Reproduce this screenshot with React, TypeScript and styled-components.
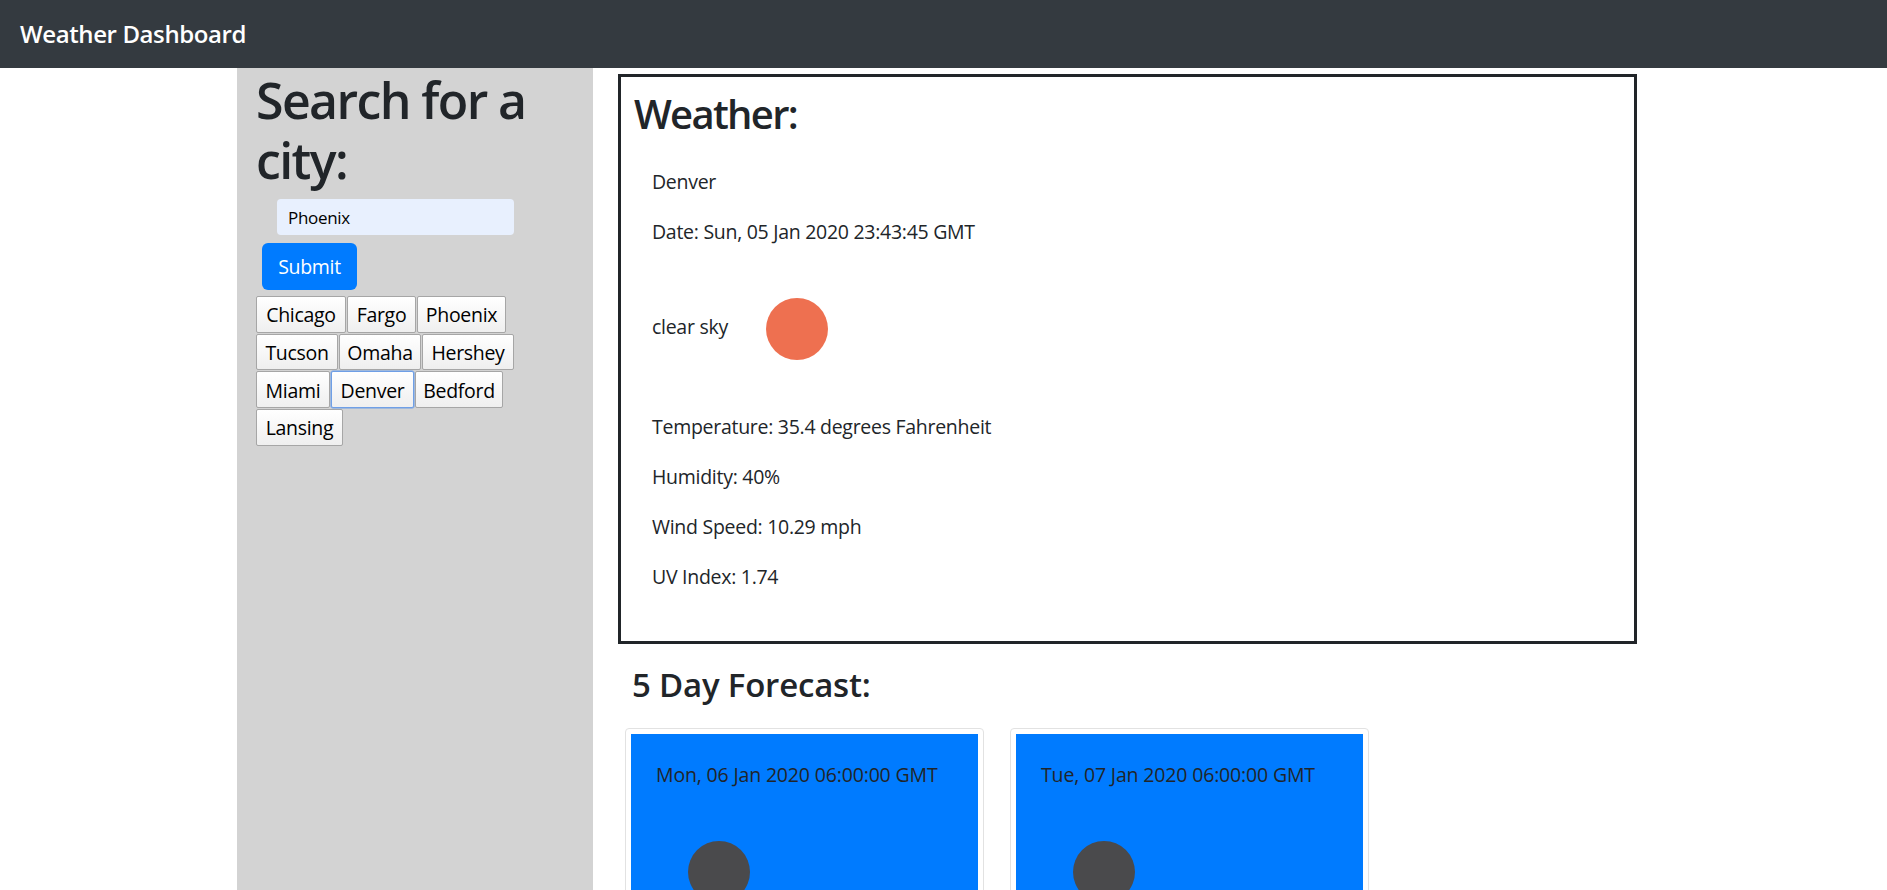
import React from "react";
import styled, { createGlobalStyle } from "styled-components";

const Global = createGlobalStyle`
  html, body { margin: 0; height: 100%; overflow: hidden; background: #fff; }
  body { font-family: "Open Sans", "Noto Sans", sans-serif; font-size: 19.5px; line-height: 30px; color: #212529; }
  #root { height: 100%; }
`;

const Page = styled.div`display: flex; flex-direction: column; height: 100vh;`;
const NavBar = styled.header`
  box-sizing: border-box; flex: 0 0 68px; display: flex; align-items: center; padding: 0 20px 1px;
  background: #343a40;
`;
const Brand = styled.span`color: #fff; font-size: 24px; font-weight: 600; letter-spacing: -0.4px;`;
const Content = styled.div`
  flex: 1; min-height: 0; overflow: hidden; display: flex;
  width: 1413px; margin-left: 237px;
`;
const Sidebar = styled.aside`
  flex: 0 0 356px; background: #d3d3d3; padding: 2px 0 0 19px; box-sizing: border-box;
`;
const SearchTitle = styled.h1`
  margin: 0; font-size: 50px; line-height: 60px; font-weight: 600; letter-spacing: -1.6px;
`;
const SearchInput = styled.input`
  display: block; box-sizing: border-box; margin: 9px 0 0 21px; width: 237px; height: 36px;
  padding: 0 11px; border: 0; border-radius: 4px; background: #e8f0fe; color: #000;
  font: 17px "Open Sans", sans-serif; letter-spacing: -0.3px; outline: none;
`;
const SubmitButton = styled.button`
  display: block; box-sizing: border-box; margin: 8px 0 6px 6px; width: 95px; height: 47px;
  border: 0; border-radius: 6px; background: #007bff; color: #fff;
  font: 19.5px "Open Sans", sans-serif; letter-spacing: -0.3px;
`;
const ChipRows = styled.div`display: flex; flex-direction: column; gap: 1px;`;
const ChipRow = styled.div`display: flex; gap: 1px;`;
const Chip = styled.button<{ $w: number; $focus?: boolean }>`
  box-sizing: border-box; width: ${p => p.$w}px; height: 36.67px; padding: 1px 0 0;
  border: 1px solid ${p => (p.$focus ? "#6f9fe6" : "#a6a6a6")};
  box-shadow: ${p => (p.$focus ? "0 0 0 0.5px #6f9fe6" : "none")};
  border-radius: 2px; background: linear-gradient(#ffffff, #efefef); color: #000;
  font: 19.5px "Open Sans", sans-serif; letter-spacing: -0.3px;
`;
const Main = styled.main`flex: 1; min-width: 0; padding: 6px 13px 0 25px; box-sizing: border-box;`;
const WeatherBox = styled.section`
  box-sizing: border-box; height: 570px; border: 3px solid #212529; padding: 13px 13px 0;
`;
const WeatherTitle = styled.h2`
  margin: 0 0 28.5px; font-size: 40px; line-height: 48px; font-weight: 600; letter-spacing: -1.7px;
`;
const Details = styled.div`padding-left: 18px;`;
const Line = styled.p`margin: 0 0 20px; font-size: 19.5px; line-height: 30px; letter-spacing: -0.28px;`;
const ConditionRow = styled.div`display: flex; align-items: center; height: 122px; margin-bottom: 23px;`;
const ConditionText = styled.span`width: 114px; padding-bottom: 2px; letter-spacing: -0.28px;`;
const Dot = styled.span<{ $color: string }>`
  display: block; width: 62px; height: 62px; border-radius: 50%; background: ${p => p.$color};
`;
const SkyDot = styled(Dot)`margin-top: 2px;`;
const ForecastTitle = styled.h3`
  margin: 22px 0 24px 14px; font-size: 33px; line-height: 38px; font-weight: 600; letter-spacing: -0.2px;
`;
const Cards = styled.div`display: flex; gap: 26px; margin-left: 7px;`;
const Card = styled.article`
  box-sizing: border-box; width: 359px; height: 500px; padding: 5px;
  border: 1px solid #e2e2e2; border-radius: 4px; background: #fff;
`;
const CardBody = styled.div`height: 100%; padding: 26px 25px 0; box-sizing: border-box; background: #007bff;`;
const CardDate = styled.p`margin: 0 0 51px; font-size: 19.5px; line-height: 30px; letter-spacing: -0.16px; white-space: nowrap;`;
const CardDot = styled(Dot)`margin-left: 32px;`;

const rows: { n: string; w: number; focus?: boolean }[][] = [
  [{ n: "Chicago", w: 90 }, { n: "Fargo", w: 69 }, { n: "Phoenix", w: 89 }],
  [{ n: "Tucson", w: 82 }, { n: "Omaha", w: 82 }, { n: "Hershey", w: 92 }],
  [{ n: "Miami", w: 74 }, { n: "Denver", w: 83, focus: true }, { n: "Bedford", w: 88 }],
  [{ n: "Lansing", w: 87 }],
];

export default function App() {
  return (
    <Page>
      <Global />
      <NavBar><Brand>Weather Dashboard</Brand></NavBar>
      <Content>
        <Sidebar>
          <SearchTitle>Search for a city:</SearchTitle>
          <SearchInput defaultValue="Phoenix" />
          <SubmitButton>Submit</SubmitButton>
          <ChipRows>
            {rows.map((r, i) => (
              <ChipRow key={i}>
                {r.map(c => <Chip key={c.n} $w={c.w} $focus={c.focus}>{c.n}</Chip>)}
              </ChipRow>
            ))}
          </ChipRows>
        </Sidebar>
        <Main>
          <WeatherBox>
            <WeatherTitle>Weather:</WeatherTitle>
            <Details>
              <Line>Denver</Line>
              <Line>Date: Sun, 05 Jan 2020 23:43:45 GMT</Line>
              <ConditionRow>
                <ConditionText>clear sky</ConditionText>
                <SkyDot $color="#ee7050" />
              </ConditionRow>
              <Line>Temperature: 35.4 degrees Fahrenheit</Line>
              <Line>Humidity: 40%</Line>
              <Line>Wind Speed: 10.29 mph</Line>
              <Line>UV Index: 1.74</Line>
            </Details>
          </WeatherBox>
          <ForecastTitle>5 Day Forecast:</ForecastTitle>
          <Cards>
            <Card><CardBody><CardDate>Mon, 06 Jan 2020 06:00:00 GMT</CardDate><CardDot $color="#4a4a4c" /></CardBody></Card>
            <Card><CardBody><CardDate>Tue, 07 Jan 2020 06:00:00 GMT</CardDate><CardDot $color="#4a4a4c" /></CardBody></Card>
          </Cards>
        </Main>
      </Content>
    </Page>
  );
}
